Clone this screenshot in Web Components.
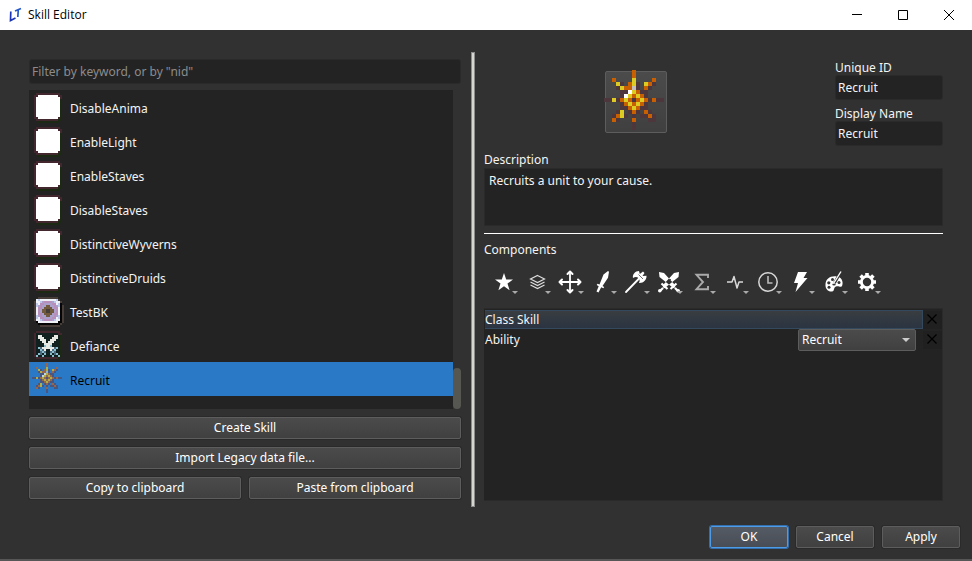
<!DOCTYPE html>
<html lang="en">
<head>
<meta charset="utf-8">
<title>Skill Editor</title>
<style>
html, body { margin: 0; height: 100%; }
body { background: #313131; color: #f4f4f4; font: 12px/16px "Noto Sans", "Open Sans", sans-serif; }
</style>
</head>
<body>
<skill-editor></skill-editor>
<script>
const define = (name, html) => customElements.define(name, class extends HTMLElement {
  connectedCallback() {
    if (this.shadowRoot) return;
    const root = this.attachShadow({ mode: 'open' });
    const t = document.createElement('template');
    t.innerHTML = '<style>:host,*{box-sizing:border-box}</style>' + (typeof html === 'function' ? html(this) : html);
    root.append(t.content.cloneNode(true));
  }
});

/* Pixel sprites: one character for each pixel of a 16 x 16 grid. */
const SUN = [
  '.......o........',
  '.......o........',
  '..o....y....o...',
  '...yd.oyd.yod...',
  '...dyoogd.od....',
  '....ddwyodd.....',
  '....dwyoyod.....',
  'ddydoyodoyododd.',
  '....doyoyod.....',
  '....ddoyodd.....',
  '...dy.dod.od....',
  '..doyd.d.ddod...',
  '..od...o...dd...',
  '.......d........',
  '.......d........',
  '................'];
const BLANK = [
  '................',
  '..mmmmmmmmmmmm..',
  '.mmwwwwwwwwwwmm.',
  '.mwwwwwwwwwwwwm.',
  ...Array(9).fill('.mwwwwwwwwwwwwn.'),
  '.mmwwwwwwwwwwmn.',
  '..mmmmmmmmmmmnn.',
  '...nnnnnnnnnnn..'];
const SPRITES = {
  sun: { rows: SUN, c: { o: '#c85f00', y: '#dccb22', d: '#4d373d', w: '#ffffff', g: '#c5bdba' } },
  sunDim: { rows: SUN, c: { o: '#98664a', y: '#aeb14a', d: '#4b567e', w: '#bfd4e2', g: '#8eb1d0' } },
  blank: { rows: BLANK, c: { m: '#42272e', n: '#1c2a14', w: '#ffffff' } },
  ring: { rows: [
    '................', '...bbbbbbbbbb...', '..wlwwwwwwwwlb..', '.bwwlvppppvlwwb.', '.blwppvvvvppwlk.', '.blvpvvggvvpvlkb',
    '.bwppvggggvppwkb', '.bwpvggbbggvpwkb', '.bwpvggbbggvpwkb', '.bwppvggggvppwkb', '.blvpvvggvvpvlkb', '.blwppvvvvppwlkb',
    '.bwwlvppppvlwwkb', '..kwwwwwwwwwwkkb', '...kkkkkkkkkkkb.', '....bbbbbbbbbb..'],
    c: { b: '#463c38', k: '#050505', l: '#bcc8ec', w: '#eef0f8', v: '#a9a0cc', p: '#b78fba', g: '#70593c' } },
  swords: { rows: [
    '................', '..mmmmmmmmmmmm..', '.mtttttttttttmm.', '.mtwwttttttwwtn.', '.mtwwwttttwwwtn.', '.mttwwwttwwwttn.', '.mtttwwtwwwtttn.',
    '.mttttwwwwttttn.', '.mttttcwwcttttn.', '.mtcbwwwwwwbctn.', '.mttcbwttwbcttn.', '.mttbcbttbcbttn.',
    '.mtcbtcttctbctn.', '.mcttcttttcttcn.', '..mmmmmmmmmmmn..', '................'],
    c: { m: '#42272e', n: '#1c2a14', t: '#10201f', w: '#e7e9e5', c: '#8bbccb', b: '#4d6b80' } }
};
define('pixel-sprite', el => {
  const s = SPRITES[el.getAttribute('name')];
  let r = '';
  s.rows.forEach((row, y) => [...row].forEach((ch, x) => {
    if (s.c[ch]) r += `<rect x="${x}" y="${y}" width="1" height="1" fill="${s.c[ch]}"/>`;
  }));
  return `<style>:host{display:block;width:32px;height:32px;flex:none}svg{display:block;width:100%;height:100%}</style>
  <svg viewBox="0 0 16 16" shape-rendering="crispEdges" aria-hidden="true">${r}</svg>`;
});

define('title-bar', `<style>
:host{display:flex;align-items:center;height:30px;flex:none;background:#fff;color:#000;font-family:"Open Sans","Noto Sans",sans-serif}
h1{font:inherit;margin:0;flex:1;padding-left:6px}
.logo{width:14px;height:16px;margin-left:8px}
button{width:46px;height:30px;border:0;padding:0;background:none;color:#000;display:grid;place-items:center}
</style>
<svg class="logo" viewBox="0 0 14 16" fill="none" stroke="#2458c8" stroke-width="1.700"><path d="M2.800 4.500l-.3 9 5-2.500" stroke="#1c35b8"/><path d="M7 4l6-2.500M10.300 2.500L9.800 10"/></svg>
<h1><slot></slot></h1>
<button aria-label="Minimize"><svg width="10" height="10" stroke="currentColor"><path d="M0 4.500h10"/></svg></button>
<button aria-label="Maximize"><svg width="10" height="10" fill="none" stroke="currentColor"><path d="M.5.5h9v9h-9z"/></svg></button>
<button aria-label="Close"><svg width="10" height="10" stroke="currentColor"><path d="M0 0l10 10M10 0L0 10"/></svg></button>`);

define('push-button', `<style>
:host{display:block;min-width:0}
button{display:block;width:100%;height:22px;padding:0;font:inherit;color:#fff;border:1px solid #5d5d5d;border-radius:2px;background:linear-gradient(#4b4b4b,#404040);box-shadow:0 0 0 1px #2a2a2a}
:host([primary]) button{border-color:#4e9be8;background:linear-gradient(#555b64,#484d56);box-shadow:0 0 0 1px #336fae}
</style><button><slot></slot></button>`);

define('text-field', el => `<style>
:host{display:block}
label{display:block;height:15px}
input{display:block;width:100%;height:25px;border:1px solid #2a2a2a;border-radius:3px;background:#232323;color:#f4f4f4;font:inherit;padding:0 2px;outline:0}
input::placeholder{color:#8c8c8c;opacity:1}
</style>${el.getAttribute('label') ? `<label for="f">${el.getAttribute('label')}</label>` : ''}
<input id="f" ${el.hasAttribute('hint') ? `aria-label="Filter" placeholder='${el.getAttribute('hint')}'` : ''} value="${el.getAttribute('value') || ''}">`);

define('skill-item', el => `<style>
:host{display:flex;align-items:center;height:34px;padding-left:3px;gap:6px}
:host([aria-selected=true]){background:#2a79c7;color:#000}
span{padding-top:3px}
</style><pixel-sprite name="${el.getAttribute('icon')}"></pixel-sprite><span><slot></slot></span>`);

define('skill-list', `<style>
:host{display:flex;background:#232323;min-height:0;overflow:hidden}
.items{flex:1}
.track{width:8px;background:#313131;display:flex;flex-direction:column;justify-content:flex-end}
.thumb{height:41px;border-radius:4px;background:#575752}
</style><div class="items"><slot></slot></div><div class="track"><div class="thumb"></div></div>`);

const ICONS = {
  Attribute: '<path fill="#fff" d="M12 3l2.200 6.500H21l-5.500 4 2.100 6.700L12 16.200 6.400 20.200l2.100-6.700L3 9.500h6.800z"/>',
  Layers: '<g fill="none" stroke="#ddd" stroke-width="1.200"><path d="M12.500 5.500l7 3.500-7 3.500-7-3.500z"/><path d="M5.500 12l7 3.500 7-3.500M5.500 15l7 3.500 7-3.500"/></g>',
  Movement: '<path d="M12 3v18M3 12h18" stroke="#fff" stroke-width="1.800"/><path fill="none" stroke="#fff" stroke-width="2" stroke-linecap="round" stroke-linejoin="round" d="M9.500 4L12 1.500 14.500 4M9.500 20l2.500 2.500 2.500-2.500M4 9.500L1.500 12 4 14.500M20 9.500l2.500 2.500-2.500 2.500"/>',
  Combat: '<path fill="#fff" d="M17 1l1 .8-1 6-5.500 8.200 1.700 1-.8 1.300-2.200-1L7.500 22.500l-2-1 2.200-5.200-2-1.300.8-1.200 2 .7L12.500 4.500z"/>',
  Weapon: '<path d="M2 22L17 6.500" stroke="#fff" stroke-width="1.800" stroke-linecap="round"/><path fill="#fff" d="M9 8c-.8-3.500 2.200-7 6-7l.8 3L19 1.500l1.500 1.500L18.500 6l4-.2c.3 4-3 7.500-7.500 7.200 1-2 .8-3.500-.6-5S11 6.500 9 8z"/><path d="M14.500 4.500l4.500 4.500" stroke="#333" stroke-width=".7"/>',
  Battle: '<path fill="#fff" d="M2 2l5 1L17.500 14.500 15 17 2.500 7zM22 2l-5 1L6.500 14.500 9 17 21.500 7z"/><path d="M8.500 15.500l-5 5M15.500 15.500l5 5M4.500 13.500l6 5.500M19.500 13.500L13.500 19" stroke="#fff" stroke-width="2.200"/><circle cx="2.800" cy="20.800" r="1.800" fill="#fff"/><circle cx="21.200" cy="20.800" r="1.800" fill="#fff"/><path d="M10.500 12.500L14 9M4.500 16l3.500 3.500M19.500 16L16 19.500" stroke="#333" stroke-width=".8"/>',
  Formula: '<path fill="none" stroke="#aaa" stroke-width="1.900" d="M18 8V4.800H6.500l6.500 7.200-6.500 7.200H18V16"/>',
  Status: '<path fill="none" stroke="#d8d8d8" stroke-width="1.500" stroke-linejoin="round" d="M4 12h5l2-5.500 3 11.500 2-6h4"/>',
  Time: '<circle cx="12" cy="12" r="9.200" fill="none" stroke="#d8d8d8" stroke-width="1.500"/><path fill="none" stroke="#bbb" stroke-width="1.600" d="M12 6v7h4.500"/>',
  Charge: '<path fill="#fff" d="M9 2h9l-3.500 6h4L6.500 22l2.500-9H5z"/>',
  Aesthetic: '<path fill="#fff" d="M15 6.500C8 5.500 4 9 3.500 14s3 8 6.500 7.500c3-.5 1-4 4-5s5 2 6.200-1-.2-7-3.200-8.500z"/><g fill="#333"><circle cx="10.500" cy="9.500" r="1.500"/><circle cx="6.800" cy="12.800" r="1.600"/><circle cx="7" cy="17.300" r="1.500"/><circle cx="17" cy="12.500" r="1.500"/><ellipse cx="12" cy="14.500" rx="1.700" ry="1"/></g><path d="M19 1.500L12.500 13" stroke="#333" stroke-width="2.800"/><path d="M19 1.500L11.500 13.500" stroke="#fff" stroke-width="1.400"/>',
  Advanced: '<circle cx="12" cy="12" r="5.600" fill="none" stroke="#fff" stroke-width="2.800"/><path stroke="#fff" stroke-width="3.600" d="M12 3v3M12 18v3M3 12h3M18 12h3M5.600 5.600l2 2M16.400 16.400l2 2M5.600 18.400l2-2M16.400 7.600l2-2"/>'
};
define('component-toolbar', () => `<style>
:host{display:flex;gap:1px;padding-left:4px}
button{position:relative;width:32px;height:32px;padding:0;border:0;background:none;display:grid;place-items:center}
svg{width:24px;height:24px}
button::after{content:"";position:absolute;right:2px;bottom:4px;border:3px solid transparent;border-top-color:#aaa;border-bottom:0}
</style>` + Object.entries(ICONS).map(([n, p]) => `<button aria-label="${n}"><svg viewBox="0 0 24 24">${p}</svg></button>`).join(''));

define('component-row', `<style>
:host{display:flex;align-items:center;height:22px}
.bar{flex:1;display:flex;align-items:center;justify-content:space-between;height:22px;min-width:0}
:host([current]) .bar{height:19px;background:linear-gradient(#393d41,#2b3442);border:1px solid #34495d;border-left:0}
:host([current]){height:19px}
.x{width:19px;height:18px;border:0;padding:0 2px 2px 0;background:#202020;color:#000;display:grid;place-items:center}
</style><div class="bar"><slot></slot></div>
<button class="x" aria-label="Remove"><svg width="10" height="10" stroke="currentColor" stroke-width="1.300"><path d="M.5.5l9 9M9.500.5l-9 9"/></svg></button>`);

define('combo-box', el => `<style>
:host{display:block;position:relative;width:118px;margin-right:7px}
select{display:block;appearance:none;width:100%;height:22px;font:inherit;color:#fff;padding:0 3px;border:1px solid #5d5d5d;border-radius:2px;background:linear-gradient(#4b4b4b,#404040)}
:host::after{content:"";position:absolute;right:6px;top:9px;border:4px solid transparent;border-top-color:#ccc;border-bottom:0;pointer-events:none}
</style><select aria-label="Ability"><option>${el.getAttribute('value')}</option></select>`);

define('skill-editor', `<style>
:host{display:flex;flex-direction:column;min-height:100vh;border-bottom:2px solid #565656}
main{flex:1;display:grid;grid-template-columns:442fr 4px 468fr;padding:22px 29px 19px;min-height:0}
.left{display:flex;flex-direction:column;gap:8px;padding:7px 0 8px;margin-right:10px}
.left text-field{margin-bottom:-2px}
.left skill-list{flex:1}
.pair{display:grid;grid-template-columns:1fr 1fr;gap:8px}
.split{background:#d5d5d2;border:1px solid #8c8c8c}
.right{display:flex;flex-direction:column;padding:8px 0 6px 9px;min-width:0}
.head{display:grid;grid-template-columns:1fr 108px;gap:168px}
.icon{justify-self:end;align-self:start;margin-top:11px;width:62px;height:62px;padding:0;border:1px solid #5d5d5d;border-radius:2px;background:linear-gradient(#4b4b4b,#404040)}
.icon pixel-sprite{width:64px;height:64px;margin:-2px}
.fields{display:grid;gap:6px}
.desc{display:block;margin-top:6px;height:16px}
textarea{display:block;height:58px;border:1px solid #2a2a2a;background:#232323;color:#f4f4f4;font:inherit;padding:4px;resize:none;outline:0}
hr{width:100%;height:1px;border:0;margin:7px 0 8px;background:#fff}
h2{font:inherit;margin:0 0 8px}
component-toolbar{margin-bottom:10px}
.comps{flex:1;background:#232323;border:1px solid #2a2a2a;border-left:0;padding:1px 0 0 1px}
footer{display:flex;justify-content:flex-end;gap:8px;padding:0 12px 11px}
footer push-button{width:78px}
</style>
<title-bar>Skill Editor</title-bar>
<main>
<section class="left">
<text-field hint='Filter by keyword, or by "nid"'></text-field>
<skill-list role="listbox" aria-label="Skills">
<skill-item role="option" icon="blank">DisableAnima</skill-item>
<skill-item role="option" icon="blank">EnableLight</skill-item>
<skill-item role="option" icon="blank">EnableStaves</skill-item>
<skill-item role="option" icon="blank">DisableStaves</skill-item>
<skill-item role="option" icon="blank">DistinctiveWyverns</skill-item>
<skill-item role="option" icon="blank">DistinctiveDruids</skill-item>
<skill-item role="option" icon="ring">TestBK</skill-item>
<skill-item role="option" icon="swords">Defiance</skill-item>
<skill-item role="option" icon="sunDim" aria-selected="true">Recruit</skill-item>
</skill-list>
<push-button>Create Skill</push-button>
<push-button>Import Legacy data file...</push-button>
<div class="pair"><push-button>Copy to clipboard</push-button><push-button>Paste from clipboard</push-button></div>
</section>
<div class="split"></div>
<section class="right">
<div class="head">
<button class="icon" aria-label="Choose icon"><pixel-sprite name="sun"></pixel-sprite></button>
<div class="fields"><text-field label="Unique ID" value="Recruit"></text-field><text-field label="Display Name" value="Recruit"></text-field></div>
</div>
<label class="desc" for="d">Description</label>
<textarea id="d">Recruits a unit to your cause.</textarea>
<hr>
<h2>Components</h2>
<component-toolbar></component-toolbar>
<div class="comps">
<component-row current>Class Skill</component-row>
<component-row><span>Ability</span><combo-box value="Recruit"></combo-box></component-row>
</div>
</section>
</main>
<footer><push-button primary>OK</push-button><push-button>Cancel</push-button><push-button>Apply</push-button></footer>`);
</script>
</body>
</html>
